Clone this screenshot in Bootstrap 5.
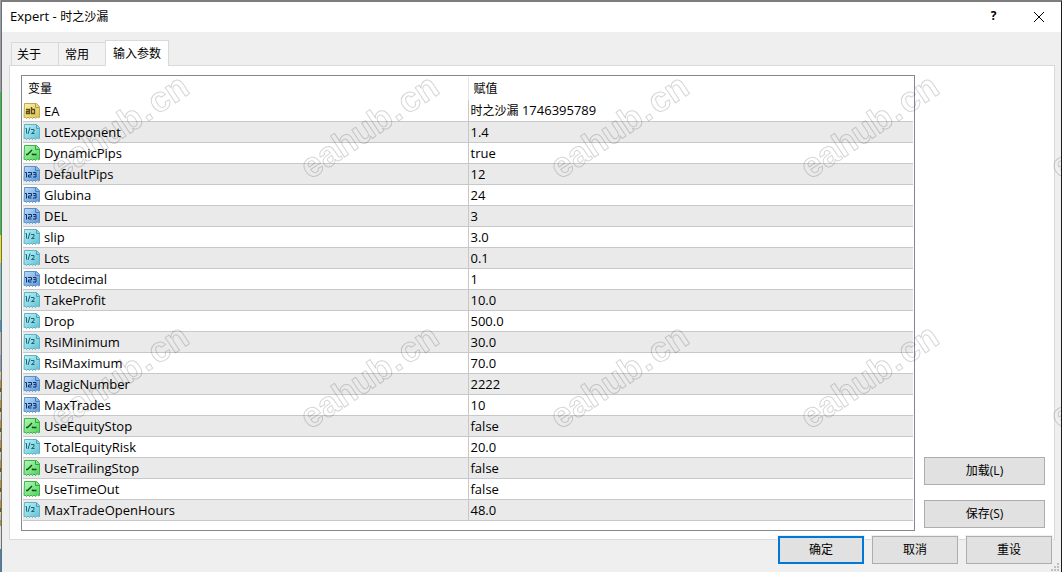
<!DOCTYPE html>
<html lang="zh-CN">
<head>
<meta charset="utf-8">
<meta name="viewport" content="width=device-width, initial-scale=1">
<title>Expert - 时之沙漏</title>
<link href="https://cdn.jsdelivr.net/npm/bootstrap@5.3.0/dist/css/bootstrap.min.css" rel="stylesheet">
<style>
  body { font: 12px/16px "Open Sans", "Noto Sans CJK SC", sans-serif; color: #000; background: #efefef; }
  .dialog-window { min-height: 100vh; border-top: 2px solid #7d7d7d; border-right: 1px solid #1c1c20; border-left: 2px solid #6e6e6e; overflow: hidden; }
  .edge-strip { left: 0; top: 0; bottom: 0; width: 1px;
    background: linear-gradient(#9aa0aa 0 16%, #28c83c 16% 41%, #e8e800 41% 46%, #7fc4c4 46% 56%, #3a96c8 56% 58%, #b8b8b8 58% 62%, #8a9cc0 62% 65%, transparent 65% 92%, #ddd 92% 96%, #3a88b8 96%),
      repeating-linear-gradient(#b8922a 0 8px, #6e5a1c 8px 12px, #e0d070 12px 15px, #b8b8c0 15px 20px); }
  .title-bar { height: 30px; padding-bottom: 2px; background: #fff; }
  .title-text { font-size: 13px; }
  .cjk { font-size: 12px; }
  .title-btn { width: 45px; height: 28px; border: 0; background: none; padding: 0; }
  .tab-strip { padding: 8px 0 0 9px; }
  .tab-strip .nav-link { height: 23px; padding: 2px 0 0 5px; text-align: left; color: #000; background: #f2f2f2; border: 1px solid #d9d9d9; border-bottom: 0; border-radius: 0; margin: 2px 0 0 0; width: 48px; line-height: 16px; }
  .tab-strip .nav-link + .nav-link { border-left: 0; padding-left: 6px; }
  .tab-strip .nav-link.active { height: 26px; width: 64px; margin: 0 0 -1px -2px; padding: 2px 0 1px 7px; background: #fff; border-left: 1px solid #d9d9d9; position: relative; }
  .tab-page { margin: 0 6px 0 7px; padding: 9px 9px 8px 11px; background: #fff; border: 1px solid #d9d9d9; }
  .param-box { border: 1px solid #828790; padding: 1px 1px 9px 1px; }
  .param-table { width: 100%; table-layout: fixed; border-collapse: collapse; font-size: 13px; }
  .param-table th { height: 23px; padding: 0 0 0 5px; font-size: 12px; font-weight: 400; }
  .param-table td { height: 21px; padding: 1px 0 0 2px; line-height: 18px; border-bottom: 1px solid #c8c8c8; white-space: nowrap; }
  .param-table td:first-child { padding-left: 0; border-right: 1px solid #c8c8c8; }
  .param-table th:first-child { border-right: 1px solid #e5e5e5; }
  .param-table tbody tr:nth-child(even) { background: #eaeaea; }
  .name-col { width: 50%; }
  .param-icon { width: 18px; height: 18px; margin-right: 3px; flex: none; }
  .side-panel { width: 121px; margin-left: 9px; gap: 15px; padding-bottom: 3px; }
  .dlg-btn { height: 28px; padding: 0; background: #e1e1e1; border: 1px solid #adadad; color: #000; border-radius: 0; font-size: 12px; line-height: 16px; }
  .dlg-btn.default-btn { border: 2px solid #0078d7; }
  .footer-bar { margin: -4px 9px 0 0; gap: 8px; position: relative; }
  .footer-bar .dlg-btn { width: 86px; box-shadow: 0 0 0 1px #efefef; }
  .grip { right: 1px; bottom: 0; }
  .watermark { inset: 0; width: 100%; height: 100%; pointer-events: none; }
  .wm-text { font: bold 35px "Liberation Sans", sans-serif; fill: none; stroke: #000; stroke-opacity: .17; stroke-linejoin: round; }
</style>
</head>
<body>
<svg width="0" height="0" class="position-absolute" aria-hidden="true">
  <defs>
    <linearGradient id="gy" x2="1" y2="1"><stop offset="0" stop-color="#fbf3b4"/><stop offset="1" stop-color="#d8c050"/></linearGradient>
    <linearGradient id="gc" x2="1" y2="1"><stop offset="0" stop-color="#c0f2f8"/><stop offset="1" stop-color="#62bfd2"/></linearGradient>
    <linearGradient id="gg" x2="1" y2="1"><stop offset="0" stop-color="#b4fab8"/><stop offset="1" stop-color="#4fd05c"/></linearGradient>
    <linearGradient id="gb" x2="1" y2="1"><stop offset="0" stop-color="#bcdcfa"/><stop offset="1" stop-color="#5c96d4"/></linearGradient>
    <path id="sheet" d="M1.500 1.500h12l3 3v11l-1 .5-1.500-1.500-1.500 2-1.500-1.500-1.500 1.500-1.500-1.500-1.500 1.500-1.500-1.500-1.500 1.500-1.500-1.500-1 .5z"/>
    <symbol id="i-ab" viewBox="0 0 18 18"><use href="#sheet" fill="url(#gy)" stroke="#bfa850"/><path d="M12.500 2v3.500h3.500" fill="none" stroke="#b59a3c"/><path d="M3 7.500h3.500v4H3.500v-2h3M8.500 5v6.500h3v-4h-3" fill="none" stroke="#5c4c10" stroke-width="1.300"/></symbol>
    <symbol id="i-half" viewBox="0 0 18 18"><use href="#sheet" fill="url(#gc)" stroke="#5cb4c6"/><path d="M13.500 2v3.500h3" fill="none" stroke="#48a3b8"/><path d="M2.500 5.500h1v5M7 4.500l-2 6.500M8 6.500h3v2l-2.500 2h3" fill="none" stroke="#156676"/></symbol>
    <symbol id="i-bool" viewBox="0 0 18 18"><use href="#sheet" fill="url(#gg)" stroke="#3fb04e"/><path d="M12.500 2v3.500h3.500" fill="none" stroke="#2fa33f"/><path d="M3 10.500h1.500l4.500-4.500M9.500 9.500v1h4" fill="none" stroke="#0b520f" stroke-width="1.400"/></symbol>
    <symbol id="i-int" viewBox="0 0 18 18"><use href="#sheet" fill="url(#gb)" stroke="#5a90cc"/><path d="M12.500 2v3.500h3.500" fill="none" stroke="#477fbd"/><path d="M2 7.500h1.500v5M5 7.500h3.500v2.500H5.500v2h3M10 7.500h3v4.500H10M10.500 9.500h2" fill="none" stroke="#0c2f66"/></symbol>
    <pattern id="wm" x="50" y="58" width="250" height="250" patternUnits="userSpaceOnUse"><g class="wm-text" transform="rotate(-33.7 10 122)"><text x="10" y="122">eahub</text><text x="119" y="122" text-anchor="middle">.</text><text x="127" y="122">cn</text></g></pattern>
  </defs>
</svg>
<main class="dialog-window position-relative">
  <header class="title-bar d-flex align-items-center">
    <span class="title-text me-auto ps-2">Expert - <span class="cjk">时之沙漏</span></span>
    <button type="button" class="title-btn" aria-label="帮助"><b>?</b></button>
    <button type="button" class="title-btn" aria-label="关闭"><svg width="12" height="12" viewBox="0 0 12 12"><path d="M1 1l10 10M11 1L1 11" stroke="#000" fill="none"/></svg></button>
  </header>
  <nav class="tab-strip nav align-items-end" role="tablist">
    <button type="button" class="nav-link" role="tab">关于</button>
    <button type="button" class="nav-link" role="tab">常用</button>
    <button type="button" class="nav-link active" role="tab" aria-selected="true">输入参数</button>
  </nav>
  <section class="tab-page d-flex">
    <div class="param-box flex-grow-1">
      <table class="param-table">
        <colgroup><col class="name-col"><col></colgroup>
        <thead><tr><th scope="col">变量</th><th scope="col">赋值</th></tr></thead>
        <tbody id="params"></tbody>
      </table>
    </div>
    <div class="side-panel d-flex flex-column justify-content-end flex-shrink-0">
      <button type="button" class="btn dlg-btn">加载(L)</button>
      <button type="button" class="btn dlg-btn">保存(S)</button>
    </div>
  </section>
  <footer class="footer-bar d-flex justify-content-end">
    <button type="button" class="btn dlg-btn default-btn">确定</button>
    <button type="button" class="btn dlg-btn">取消</button>
    <button type="button" class="btn dlg-btn">重设</button>
  </footer>
  <svg class="grip position-absolute" width="9" height="9" viewBox="0 0 9 9"><path d="M6 0h2v2H6zM3 3h2v2H3zM6 3h2v2H6zM0 6h2v2H0zM3 6h2v2H3zM6 6h2v2H6z" fill="#bfbfbf"/></svg>
</main>
<div class="edge-strip position-absolute"></div>
<svg class="watermark position-absolute" aria-hidden="true"><rect width="100%" height="100%" fill="url(#wm)"/></svg>
<script src="https://cdn.jsdelivr.net/npm/bootstrap@5.3.0/dist/js/bootstrap.bundle.min.js"></script>
<script>
  const rows = [
    ['ab', 'EA', '<span class="cjk">时之沙漏</span> 1746395789'], ['half', 'LotExponent', '1.4'], ['bool', 'DynamicPips', 'true'],
    ['int', 'DefaultPips', '12'], ['int', 'Glubina', '24'], ['int', 'DEL', '3'], ['half', 'slip', '3.0'],
    ['half', 'Lots', '0.1'], ['int', 'lotdecimal', '1'], ['half', 'TakeProfit', '10.0'], ['half', 'Drop', '500.0'],
    ['half', 'RsiMinimum', '30.0'], ['half', 'RsiMaximum', '70.0'], ['int', 'MagicNumber', '2222'],
    ['int', 'MaxTrades', '10'], ['bool', 'UseEquityStop', 'false'], ['half', 'TotalEquityRisk', '20.0'],
    ['bool', 'UseTrailingStop', 'false'], ['bool', 'UseTimeOut', 'false'], ['half', 'MaxTradeOpenHours', '48.0']
  ];
  document.getElementById('params').innerHTML = rows.map(([icon, name, value]) =>
    `<tr><td><div class="d-flex align-items-center"><svg class="param-icon" aria-hidden="true"><use href="#i-${icon}"/></svg>${name}</div></td><td>${value}</td></tr>`).join('');
</script>
</body>
</html>
